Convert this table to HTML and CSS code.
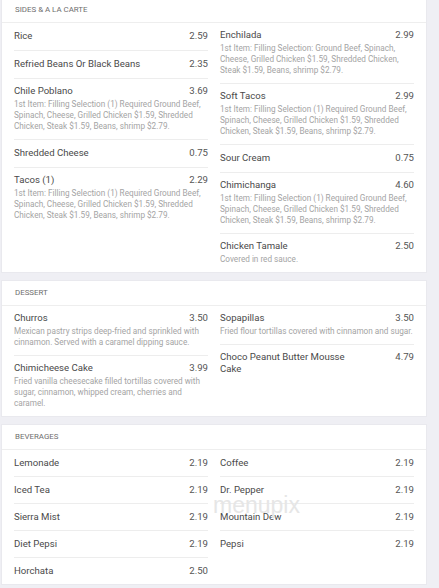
FILE: index.html
```html
<!DOCTYPE html>
<html>
<head>
<meta charset="utf-8">
<link rel="stylesheet" href="styles.css">
</head>
<body>
<div class="page">
  <section class="card first">
    <div class="card-head">SIDES &amp; A LA CARTE</div>
    <div class="cols">
      <div class="col">
        <div class="item"><div class="row"><span>Rice</span><span class="price">2.59</span></div></div>
        <div class="item"><div class="row"><span>Refried Beans Or Black Beans</span><span class="price">2.35</span></div></div>
        <div class="item d"><div class="row"><span>Chile Poblano</span><span class="price">3.69</span></div>
          <div class="desc">1st Item: Filling Selection (1) Required Ground Beef, Spinach, Cheese, Grilled Chicken $1.59, Shredded Chicken, Steak $1.59, Beans, shrimp $2.79.</div></div>
        <div class="item"><div class="row"><span>Shredded Cheese</span><span class="price">0.75</span></div></div>
        <div class="item d"><div class="row"><span>Tacos (1)</span><span class="price">2.29</span></div>
          <div class="desc">1st Item: Filling Selection (1) Required Ground Beef, Spinach, Cheese, Grilled Chicken $1.59, Shredded Chicken, Steak $1.59, Beans, shrimp $2.79.</div></div>
      </div>
      <div class="col">
        <div class="item d"><div class="row"><span>Enchilada</span><span class="price">2.99</span></div>
          <div class="desc">1st Item: Filling Selection: Ground Beef, Spinach, Cheese, Grilled Chicken $1.59, Shredded Chicken, Steak $1.59, Beans, shrimp $2.79.</div></div>
        <div class="item d"><div class="row"><span>Soft Tacos</span><span class="price">2.99</span></div>
          <div class="desc">1st Item: Filling Selection (1) Required Ground Beef, Spinach, Cheese, Grilled Chicken $1.59, Shredded Chicken, Steak $1.59, Beans, shrimp $2.79.</div></div>
        <div class="item"><div class="row"><span>Sour Cream</span><span class="price">0.75</span></div></div>
        <div class="item d"><div class="row"><span>Chimichanga</span><span class="price">4.60</span></div>
          <div class="desc">1st Item: Filling Selection (1) Required Ground Beef, Spinach, Cheese, Grilled Chicken $1.59, Shredded Chicken, Steak $1.59, Beans, shrimp $2.79.</div></div>
        <div class="item d"><div class="row"><span>Chicken Tamale</span><span class="price">2.50</span></div>
          <div class="desc">Covered in red sauce.</div></div>
      </div>
    </div>
  </section>

  <section class="card">
    <div class="card-head">DESSERT</div>
    <div class="cols">
      <div class="col">
        <div class="item d"><div class="row"><span>Churros</span><span class="price">3.50</span></div>
          <div class="desc">Mexican pastry strips deep-fried and sprinkled with cinnamon. Served with a caramel dipping sauce.</div></div>
        <div class="item d"><div class="row"><span>Chimicheese Cake</span><span class="price">3.99</span></div>
          <div class="desc">Fried vanilla cheesecake filled tortillas covered with sugar, cinnamon, whipped cream, cherries and caramel.</div></div>
      </div>
      <div class="col">
        <div class="item d"><div class="row"><span>Sopapillas</span><span class="price">3.50</span></div>
          <div class="desc">Fried flour tortillas covered with cinnamon and sugar.</div></div>
        <div class="item d"><div class="row"><span class="wrapname">Choco Peanut Butter Mousse Cake</span><span class="price">4.79</span></div></div>
      </div>
    </div>
  </section>

  <section class="card drinks">
    <div class="card-head">BEVERAGES</div>
    <div class="cols">
      <div class="col">
        <div class="item"><div class="row"><span>Lemonade</span><span class="price">2.19</span></div></div>
        <div class="item"><div class="row"><span>Iced Tea</span><span class="price">2.19</span></div></div>
        <div class="item"><div class="row"><span>Sierra Mist</span><span class="price">2.19</span></div></div>
        <div class="item"><div class="row"><span>Diet Pepsi</span><span class="price">2.19</span></div></div>
        <div class="item"><div class="row"><span>Horchata</span><span class="price">2.50</span></div></div>
      </div>
      <div class="col">
        <div class="item"><div class="row"><span>Coffee</span><span class="price">2.19</span></div></div>
        <div class="item"><div class="row"><span>Dr. Pepper</span><span class="price">2.19</span></div></div>
        <div class="item"><div class="row"><span>Mountain Dew</span><span class="price">2.19</span></div></div>
        <div class="item"><div class="row"><span>Pepsi</span><span class="price">2.19</span></div></div>
      </div>
    </div>
    <div class="watermark">menupix</div>
  </section>
</div>
</body>
</html>
```

FILE: styles.css
```css
html, body {
  margin: 0;
  padding: 0;
}
body {
  background: #efeff4;
  font-family: Roboto, "Liberation Sans", Arial, sans-serif;
  color: #444;
}
.page {
  width: 426px;
  margin-left: 1px;
}
.card {
  position: relative;
  background: #fff;
  border: 1px solid #e9e9ee;
  margin-bottom: 7px;
  padding: 0 12px;
}
.card.first {
  margin-top: -3px;
}
.card-head {
  height: 24px;
  line-height: 24px;
  font-size: 7.9px;
  color: #6e6e6e;
  border-bottom: 1px solid #eeeeee;
  margin: 0 -12px;
  padding: 0 13px;
}
.cols {
  display: grid;
  grid-template-columns: 1fr 1fr;
  column-gap: 12px;
}
.item {
  padding: 7px 0 8px;
  border-bottom: 1px solid #ededed;
}
.item.d {
  padding: 6px 0 7px;
}
.drinks .item {
  padding: 7px 0 7px;
}
.item:last-child {
  border-bottom: none;
}
.row {
  display: flex;
  justify-content: space-between;
  align-items: flex-start;
  font-size: 9.6px;
  line-height: 12px;
  color: #4a4a4a;
}
.price {
  color: #555;
  margin-left: 8px;
}
.wrapname {
  max-width: 130px;
}
.desc {
  font-size: 8.2px;
  line-height: 11px;
  color: #a4a4a4;
  margin-top: 2px;
}
.watermark {
  position: absolute;
  left: 211px;
  top: 69px;
  font-size: 23px;
  line-height: 23px;
  color: #e6e6e6;
  font-family: "Liberation Sans", Arial, sans-serif;
  pointer-events: none;
}
```
